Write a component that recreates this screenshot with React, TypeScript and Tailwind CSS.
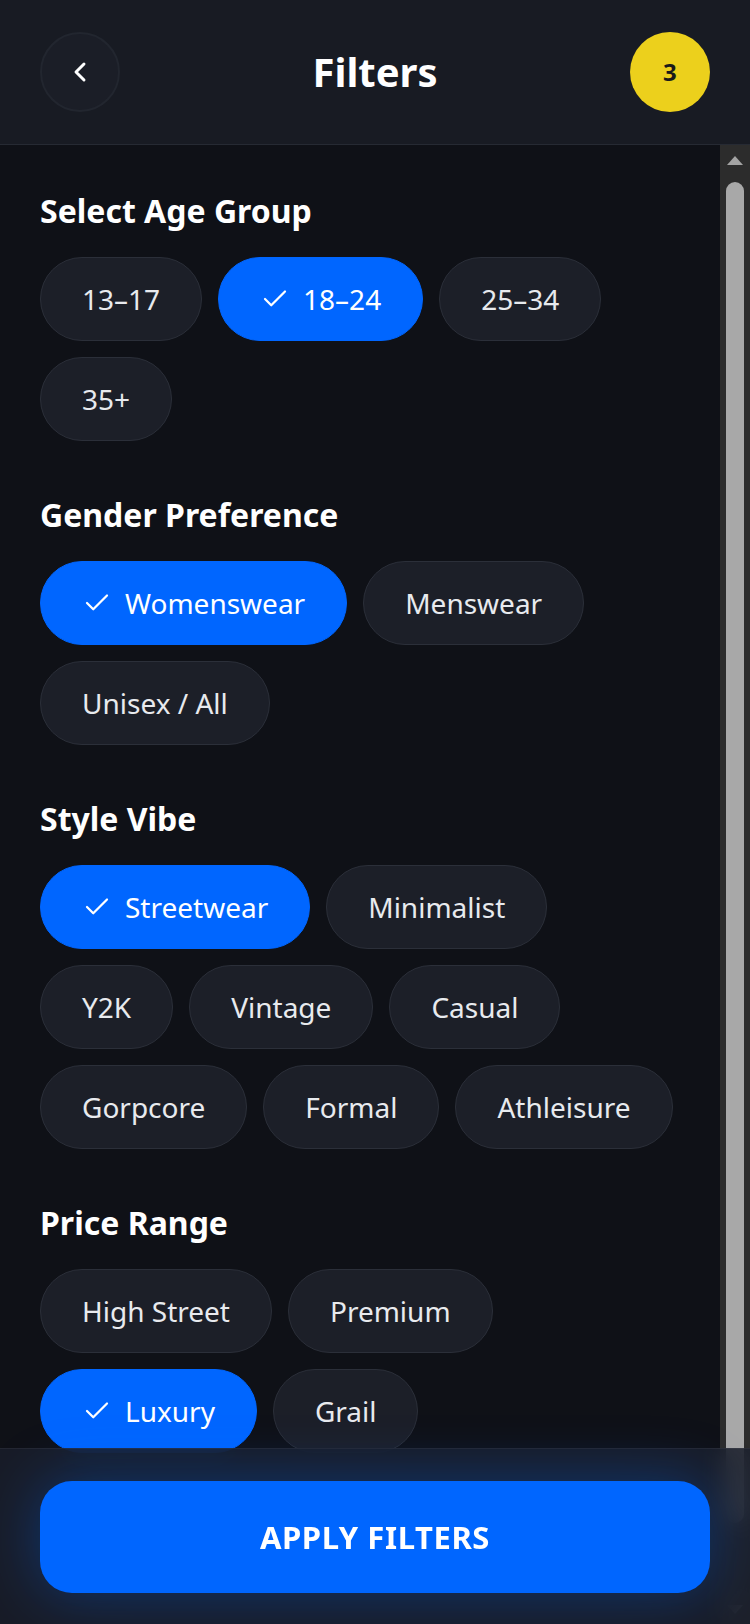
import { useState } from "react";

type Section = {
  title: string;
  options: string[];
};

const SECTIONS: Section[] = [
  { title: "Select Age Group", options: ["13–17", "18–24", "25–34", "35+"] },
  { title: "Gender Preference", options: ["Womenswear", "Menswear", "Unisex / All"] },
  {
    title: "Style Vibe",
    options: ["Streetwear", "Minimalist", "Y2K", "Vintage", "Casual", "Gorpcore", "Formal", "Athleisure"],
  },
  { title: "Price Range", options: ["High Street", "Premium", "Luxury", "Grail"] },
];

const INITIAL: Record<string, string> = {
  "Select Age Group": "18–24",
  "Gender Preference": "Womenswear",
  "Style Vibe": "Streetwear",
  "Price Range": "Luxury",
};

function CheckIcon() {
  return (
    <svg width="30" height="30" viewBox="0 0 24 24" fill="none" stroke="currentColor" strokeWidth="1.8" strokeLinecap="round" strokeLinejoin="round">
      <path d="M20 6 9 17l-5-5" />
    </svg>
  );
}

function Chip({ label, active, onClick }: { label: string; active: boolean; onClick: () => void }) {
  return (
    <button
      type="button"
      onClick={onClick}
      className={
        active
          ? "h-[84px] px-[41px] rounded-full border border-[#0066ff] bg-[#0066ff] text-white text-[28px] flex items-center gap-[13px]"
          : "h-[84px] px-[41px] rounded-full border border-[#2b2f39] bg-[#1c1f28] text-[#e8eaee] text-[28px] flex items-center"
      }
    >
      {active && <CheckIcon />}
      <span>{label}</span>
    </button>
  );
}

// drawn scrollbar, headless screenshots hide the native one
function ScrollBar() {
  return (
    <div className="w-[30px] shrink-0 bg-[#2c2c2c] flex flex-col items-center">
      <div className="h-[30px] flex items-center justify-center">
        <svg width="16" height="9" viewBox="0 0 16 9">
          <polygon points="8,0 16,9 0,9" fill="#a3a3a3" />
        </svg>
      </div>
      <div className="flex-1 w-full px-[6px] pt-[7px]">
        <div className="h-[1341px] rounded-full bg-[#a8a8a8]" />
      </div>
      <div className="h-[30px] flex items-center justify-center">
        <svg width="16" height="9" viewBox="0 0 16 9">
          <polygon points="0,0 16,0 8,9" fill="#a3a3a3" />
        </svg>
      </div>
    </div>
  );
}

export default function App() {
  const [selected, setSelected] = useState<Record<string, string>>(INITIAL);

  return (
    <div className="relative h-[1624px] w-[750px] overflow-hidden flex flex-col bg-[#0f1117] font-['Noto_Sans',sans-serif]">
      <header className="h-[145px] shrink-0 flex items-center justify-between px-10 bg-[#181b23] border-b border-[#262a33]">
        <button
          type="button"
          aria-label="Back"
          className="w-20 h-20 rounded-full bg-[#1b1e27] border-2 border-[#22262f] flex items-center justify-center text-white"
        >
          <svg width="32" height="32" viewBox="0 0 24 24" fill="none" stroke="currentColor" strokeWidth="2.2" strokeLinecap="round" strokeLinejoin="round">
            <path d="m15 18-6-6 6-6" />
          </svg>
        </button>
        <h1 className="text-[40px] font-bold text-white leading-none">Filters</h1>
        <div className="w-20 h-20 rounded-full bg-[#ecd01c] flex items-center justify-center text-[24px] font-bold text-[#1a1a1a]">
          3
        </div>
      </header>

      <div className="flex-1 min-h-0 flex">
        <div className="flex-1 overflow-y-auto [scrollbar-width:none]">
          <div className="px-10 pt-12 pb-[242px] flex flex-col gap-14">
            {SECTIONS.map((s) => (
              <section key={s.title}>
                <h2 className="text-[32px] leading-[36px] font-bold text-white mb-7">{s.title}</h2>
                <div className="flex flex-wrap gap-4">
                  {s.options.map((o) => (
                    <Chip
                      key={o}
                      label={o}
                      active={selected[s.title] === o}
                      onClick={() => setSelected((prev) => ({ ...prev, [s.title]: o }))}
                    />
                  ))}
                </div>
              </section>
            ))}
          </div>
        </div>
        <ScrollBar />
      </div>

      <div className="absolute bottom-0 inset-x-0 h-[176px] px-10 pt-8 bg-[#1a1f2a]/85 backdrop-blur-md border-t border-white/5">
        <button
          type="button"
          className="w-full h-[112px] rounded-[32px] bg-[#0066ff] text-white text-[31px] font-bold tracking-[0.6px] shadow-[0_0_60px_rgba(0,102,255,0.35)]"
        >
          APPLY FILTERS
        </button>
      </div>
    </div>
  );
}
